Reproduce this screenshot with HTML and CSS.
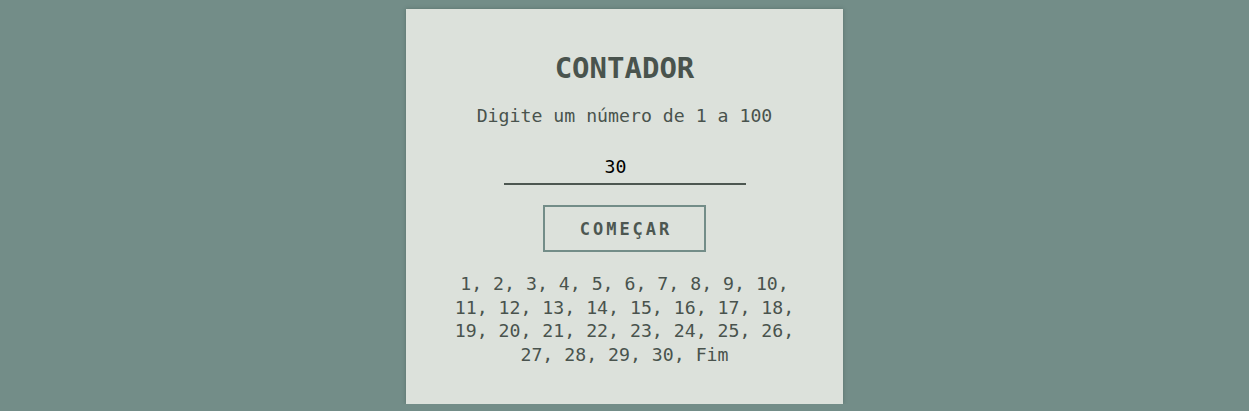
FILE: index.html
```html
<!DOCTYPE html>
<html lang="pt-BR">
<head>
<meta charset="utf-8">
<title>Contador</title>
<link rel="stylesheet" href="styles.css">
</head>
<body>
<main class="card">
  <h1 class="title">CONTADOR</h1>
  <p class="subtitle">Digite um número de 1 a 100</p>
  <input class="number" type="text" value="30">
  <button class="start" type="button">COMEÇAR</button>
  <p class="result">1, 2, 3, 4, 5, 6, 7, 8, 9, 10, 11, 12, 13, 14, 15, 16, 17, 18, 19, 20, 21, 22, 23, 24, 25, 26, 27, 28, 29, 30, Fim</p>
</main>
</body>
</html>
```
FILE: styles.css
```css
html, body {
  margin: 0;
  padding: 0;
}
body {
  background: #738d88;
  font-family: "DejaVu Sans Mono", "Liberation Mono", monospace;
  color: #49534d;
  padding-top: 9px;
}
.card {
  box-sizing: border-box;
  width: 437px;
  height: 395px;
  margin: 0 auto;
  background: #dce1db;
  box-shadow: 0 0 4px rgba(60, 80, 76, 0.45);
  display: flex;
  flex-direction: column;
  align-items: center;
  padding: 41px 40px 0;
}
.title {
  margin: 0;
  font-size: 29px;
  line-height: 36px;
  font-weight: bold;
}
.subtitle {
  margin: 18px 0 0;
  font-size: 18.2px;
  line-height: 24px;
}
.number {
  margin-top: 27px;
  width: 242px;
  box-sizing: border-box;
  border: none;
  border-bottom: 2px solid #4d5751;
  background: transparent;
  font-family: inherit;
  font-size: 18.2px;
  line-height: 24px;
  padding: 0 18px 4px 0;
  text-align: center;
  color: #000;
  outline: none;
}
.start {
  margin-top: 20px;
  width: 163px;
  height: 47px;
  box-sizing: border-box;
  border: 2px solid #738d88;
  background: transparent;
  font-family: inherit;
  font-size: 17px;
  font-weight: bold;
  letter-spacing: 3px;
  color: #4d5751;
  padding: 0 0 0 3px;
}
.result {
  margin: 20px 0 0;
  font-size: 18.2px;
  line-height: 23.5px;
  text-align: center;
}
```
